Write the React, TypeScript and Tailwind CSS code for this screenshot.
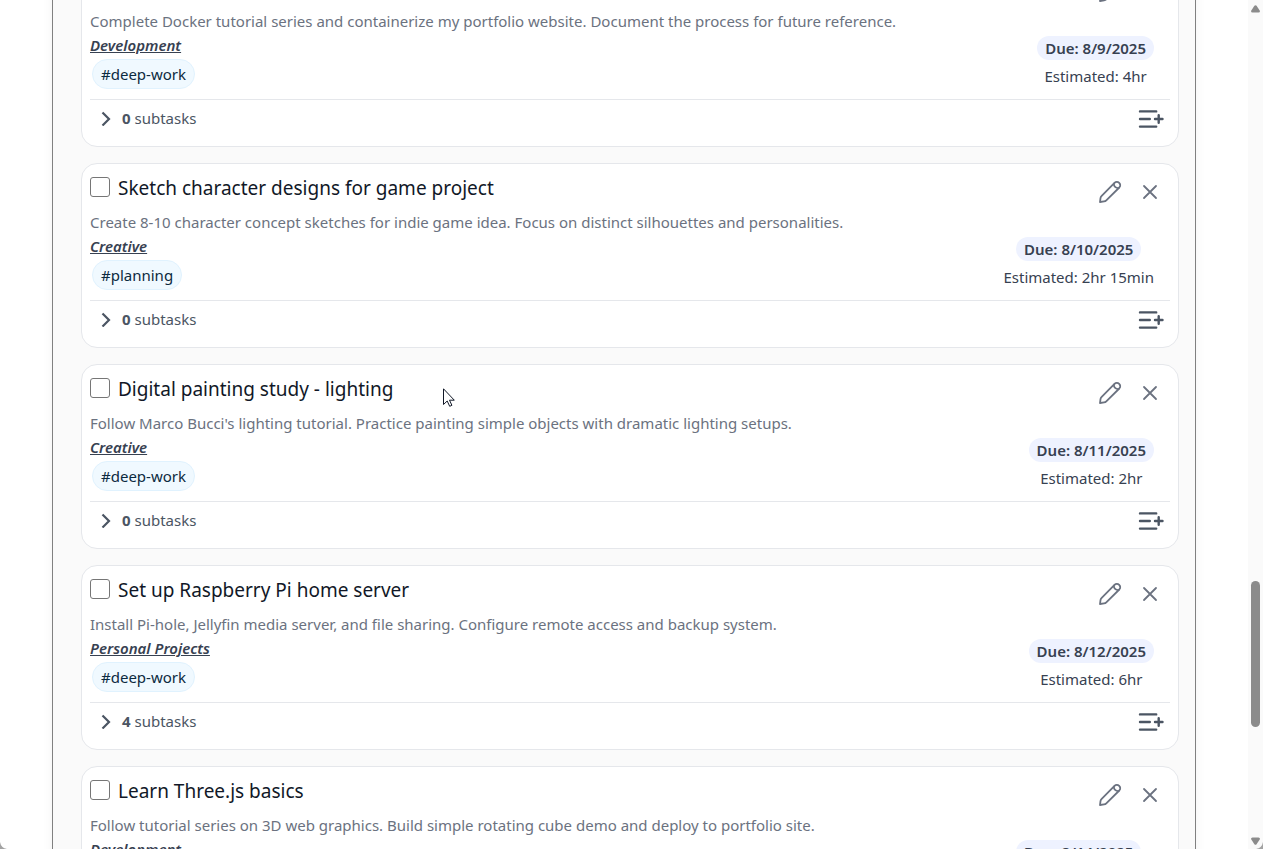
import React from "react";

type Task = {
  title: string;
  description: string;
  category: string;
  tag: string;
  due: string;
  estimate: string;
  subtasks: number;
};

const tasks: Task[] = [
  {
    title: "Learn Docker basics",
    description:
      "Complete Docker tutorial series and containerize my portfolio website. Document the process for future reference.",
    category: "Development",
    tag: "#deep-work",
    due: "8/9/2025",
    estimate: "4hr",
    subtasks: 0,
  },
  {
    title: "Sketch character designs for game project",
    description:
      "Create 8-10 character concept sketches for indie game idea. Focus on distinct silhouettes and personalities.",
    category: "Creative",
    tag: "#planning",
    due: "8/10/2025",
    estimate: "2hr 15min",
    subtasks: 0,
  },
  {
    title: "Digital painting study - lighting",
    description:
      "Follow Marco Bucci's lighting tutorial. Practice painting simple objects with dramatic lighting setups.",
    category: "Creative",
    tag: "#deep-work",
    due: "8/11/2025",
    estimate: "2hr",
    subtasks: 0,
  },
  {
    title: "Set up Raspberry Pi home server",
    description:
      "Install Pi-hole, Jellyfin media server, and file sharing. Configure remote access and backup system.",
    category: "Personal Projects",
    tag: "#deep-work",
    due: "8/12/2025",
    estimate: "6hr",
    subtasks: 4,
  },
  {
    title: "Learn Three.js basics",
    description:
      "Follow tutorial series on 3D web graphics. Build simple rotating cube demo and deploy to portfolio site.",
    category: "Development",
    tag: "#deep-work",
    due: "8/14/2025",
    estimate: "3hr 30min",
    subtasks: 0,
  },
];

function PencilIcon() {
  return (
    <svg viewBox="0 0 24 24" className="size-6" fill="none" stroke="currentColor" strokeWidth="1.8" strokeLinecap="round" strokeLinejoin="round" aria-hidden="true">
      <path d="M2 22 L2.500 18.200 Q2.700 16.800 3.700 15.800 L16.500 2.900 A3.250 3.250 0 0 1 21.300 7.500 L8.300 20.300 Q7.400 21.200 6.100 21.400 Z" />
      <path d="M15.900 3.700 C15.700 6.300 17.700 8.200 20.500 8.100" />
    </svg>
  );
}

function CloseIcon() {
  return (
    <svg viewBox="0 0 24 24" className="size-6" fill="none" stroke="currentColor" strokeWidth="1.8" strokeLinecap="round" aria-hidden="true">
      <path d="M6 6 18 18M18 6 6 18" />
    </svg>
  );
}

function AddSubtaskIcon() {
  return (
    <svg viewBox="0 0 28 24" className="h-6 w-7" fill="none" stroke="currentColor" strokeWidth="2.400" strokeLinecap="round" aria-hidden="true">
      <path d="M2 4.400H18.200M2 12H11.800M2 19.600H18.200M17 12H24.500M20.700 8.300V15.700" />
    </svg>
  );
}

function ChevronIcon() {
  return (
    <svg viewBox="0 0 16 16" className="size-4" fill="none" stroke="currentColor" strokeWidth="2.2" aria-hidden="true">
      <path d="M4.500 2.500 11 9 4.500 15.500" />
    </svg>
  );
}

function TaskCard({ task, id }: { task: Task; id: string }) {
  return (
    <li className="rounded-2xl border border-[#e5e7eb] bg-white p-2">
      <div className="flex h-[38px] items-start justify-between">
        <div className="flex items-start gap-2 pt-[5px]">
          <input id={id} type="checkbox" className="size-5 appearance-none rounded-[3px] border border-[#767676] bg-white" />
          <label htmlFor={id} className="text-[19px] leading-[22px] text-[#111827]">
            {task.title}
          </label>
        </div>
        <div className="flex text-[#6b7280]">
          <button type="button" aria-label="Edit task" className="flex size-10 items-center justify-center">
            <PencilIcon />
          </button>
          <button type="button" aria-label="Delete task" className="flex size-10 items-center justify-center">
            <CloseIcon />
          </button>
        </div>
      </div>
      <p className="text-[15px] leading-6 text-[#6b7280]">{task.description}</p>
      <div className="flex items-start justify-between">
        <div>
          <p className="text-[15px] leading-6 font-semibold text-[#374151] italic underline">{task.category}</p>
          <div className="mt-0.5 ml-0.5 w-fit rounded-full border border-[#e0f2fe] bg-[#f0f9ff] px-2 text-[15px] leading-7 text-[#0c2a40]">
            {task.tag}
          </div>
        </div>
        <div className="mt-[3px] mr-4 flex flex-col items-center text-[15px] text-[#374151]">
          <div className="rounded-full bg-[#eef2ff] px-2 leading-6 font-semibold">Due: {task.due}</div>
          <div className="mt-1 leading-6">Estimated: {task.estimate}</div>
        </div>
      </div>
      <div className="mt-2.5 flex h-[39px] items-center justify-between border-t border-[#e5e7eb] text-[#4b5563]">
        <button type="button" className="mb-0.5 ml-2 flex items-center gap-2 text-[15px] leading-6">
          <ChevronIcon />
          <span>
            <strong>{task.subtasks}</strong> subtasks
          </span>
        </button>
        <button type="button" aria-label="Add subtask" className="mr-1">
          <AddSubtaskIcon />
        </button>
      </div>
    </li>
  );
}

function ScrollRail() {
  return (
    <div className="flex w-[15px] shrink-0 flex-col items-center bg-[#fafafa] text-[#8b8b8b]" aria-hidden="true">
      <svg viewBox="0 0 15 15" className="h-4 w-[15px]" fill="currentColor">
        <path d="M3 10.500 Q3 12 4.500 12 H10.500 Q12 12 12 10.500 L8.600 5.200 Q7.500 4.200 6.400 5.200Z" />
      </svg>
      <div className="flex w-full flex-1 flex-col items-center">
        <div className="grow-[565]" />
        <div className="w-[9px] grow-[146] rounded-full bg-[#8b8b8b]" />
        <div className="grow-[106]" />
      </div>
      <svg viewBox="0 0 15 15" className="h-4 w-[15px]" fill="currentColor">
        <path d="M3 5.500 Q3 4 4.500 4 H10.500 Q12 4 12 5.500 L8.600 10.800 Q7.500 11.800 6.400 10.800Z" />
      </svg>
    </div>
  );
}

export default function App() {
  return (
    <div className="relative flex h-screen overflow-hidden bg-white font-['Noto_Sans','Open_Sans',sans-serif]">
      <main className="min-w-0 flex-1 overflow-hidden px-[52px]">
        <section className="min-h-screen border-x border-[#808080] bg-[#fafafa] pr-4 pl-7 shadow-[0_0_10px_rgba(0,0,0,0.06)]">
          <ul className="-mt-[38px] flex flex-col gap-4">
            {tasks.map((task, i) => (
              <TaskCard key={task.title} task={task} id={`task-${i}`} />
            ))}
          </ul>
        </section>
      </main>
      <ScrollRail />
      <svg viewBox="0 0 12 19" className="pointer-events-none absolute top-[388px] left-[443px] h-[19px] w-3" fill="white" stroke="#111827" strokeWidth="1" aria-hidden="true">
        <path d="M.5.8V16.500L4.200 13 6.700 18.300 8.900 17.300 6.500 12.200H11.300Z" />
      </svg>
      <svg viewBox="0 0 8 8" className="pointer-events-none absolute bottom-0 left-0 size-2" fill="#a3a3a3" aria-hidden="true">
        <path d="M0 1Q1 7 7 8H0Z" />
      </svg>
      <svg viewBox="0 0 8 8" className="pointer-events-none absolute right-0 bottom-0 size-2" fill="#a3a3a3" aria-hidden="true">
        <path d="M8 1Q7 7 1 8H8Z" />
      </svg>
    </div>
  );
}
